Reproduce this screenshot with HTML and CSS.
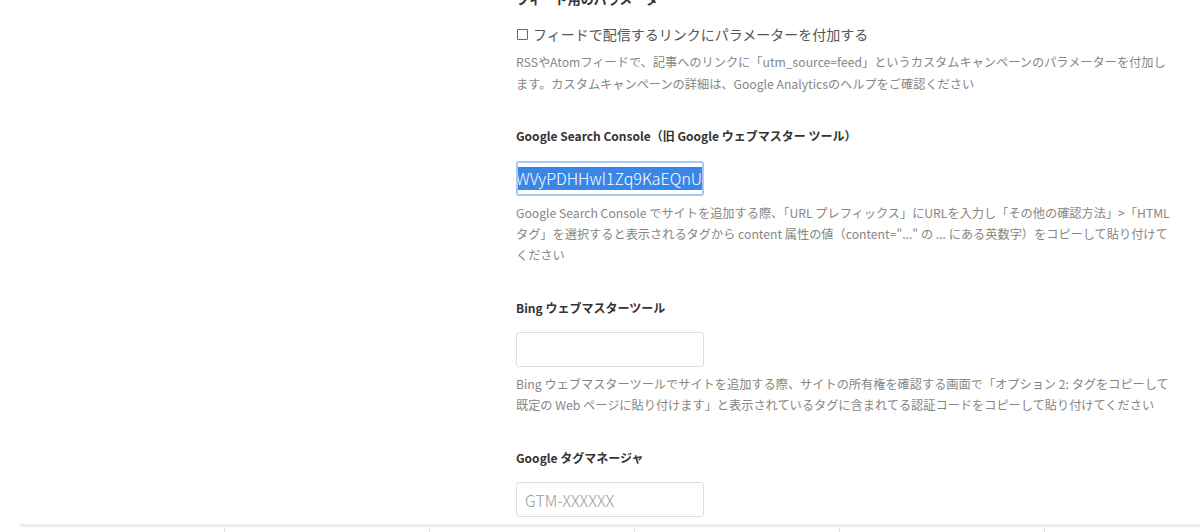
FILE: index.html
```html
<!DOCTYPE html>
<html lang="ja">
<head>
<meta charset="utf-8">
<title>設定</title>
<link rel="stylesheet" href="styles.css">
</head>
<body>
<div class="page">
  <aside class="side"></aside>
  <main class="main">
    <section class="group first">
      <h3 class="label top">フィード用のパラメーター</h3>
      <label class="check"><span class="box"></span>フィードで配信するリンクにパラメーターを付加する</label>
      <p class="help h-first">RSSやAtomフィードで、記事へのリンクに「utm_source=feed」というカスタムキャンペーンのパラメーターを付加し<br>ます。カスタムキャンペーンの詳細は、Google Analyticsのヘルプをご確認ください</p>
    </section>
    <section class="group">
      <h3 class="label wide">Google Search Console（旧 Google ウェブマスター ツール）</h3>
      <div class="field focus"><span class="sel">WVyPDHHwl1Zq9KaEQnU</span></div>
      <p class="help">Google Search Console でサイトを追加する際、「URL プレフィックス」にURLを入力し「その他の確認方法」&gt;「HTML<br>タグ」を選択すると表示されるタグから content 属性の値（content="..." の ... にある英数字）をコピーして貼り付けて<br>ください</p>
    </section>
    <section class="group">
      <h3 class="label">Bing ウェブマスターツール</h3>
      <div class="field"></div>
      <p class="help">Bing ウェブマスターツールでサイトを追加する際、サイトの所有権を確認する画面で「オプション 2: タグをコピーして<br>既定の Web ページに貼り付けます」と表示されているタグに含まれてる認証コードをコピーして貼り付けてください</p>
    </section>
    <section class="group last">
      <h3 class="label">Google タグマネージャ</h3>
      <div class="field"><span class="ph">GTM-XXXXXX</span></div>
    </section>
  </main>
</div>
<footer class="tabs">
  <div class="tab"></div>
  <div class="tab"></div>
  <div class="tab"></div>
  <div class="tab"></div>
  <div class="tab"></div>
  <div class="tab end"></div>
</footer>
</body>
</html>
```

FILE: styles.css
```css
html, body {
  margin: 0;
  padding: 0;
  background: #fff;
  overflow: hidden;
  height: 532px;
}
body {
  font-family: "Noto Sans CJK JP", "Open Sans", sans-serif;
  color: #333;
}
.page {
  display: flex;
  height: 524px;
  overflow: hidden;
}
.side {
  width: 516px;
  flex: none;
}
.main {
  width: 684px;
  flex: none;
}
.group {
  margin-bottom: 32px;
}
.group.first {
  margin-bottom: 31px;
}
.group.last {
  margin-bottom: 0;
}
.label {
  margin: 0 0 14px;
  font-size: 12px;
  line-height: 20px;
  font-weight: 700;
  color: #333;
}
.label.wide {
  margin-bottom: 15px;
}
.label.top {
  margin: -11px 0 0;
  font-size: 13px;
}
.check {
  display: flex;
  align-items: center;
  margin-top: 14px;
  font-size: 14px;
  line-height: 22px;
  color: #555;
}
.box {
  width: 9px;
  height: 9px;
  border: 1px solid #666;
  border-radius: 1px;
  margin: 0 5px 0 1px;
}
.help {
  margin: 7px 0 0;
  font-size: 12.2px;
  line-height: 21px;
  color: #868686;
  white-space: nowrap;
}
.help.h-first {
  margin-top: 6px;
  line-height: 22px;
}
.field {
  box-sizing: border-box;
  width: 188px;
  height: 35px;
  border: 1px solid #dcdfe2;
  border-radius: 3px;
  display: flex;
  align-items: center;
  overflow: hidden;
  white-space: nowrap;
  font-size: 16px;
}
.field.focus {
  border: 2px solid #a3cbf3;
  padding-left: 4px;
}
.sel {
  background: #3a86e6;
  color: #fff;
  margin-left: -6px;
  line-height: 23px;
  font-weight: 300;
  padding: 0 2px 0 0;
}
.ph {
  color: #9a9a9a;
  padding-left: 8px;
  font-weight: 300;
}
.tabs {
  display: flex;
  margin-left: 20px;
  height: 8px;
  border-top: 3px solid #ededed;
  box-sizing: border-box;
}
.tab {
  width: 205px;
  flex: none;
  position: relative;
}
.tab::after {
  content: "";
  position: absolute;
  right: 0;
  top: 1px;
  width: 1px;
  height: 4px;
  background: #e0e0e0;
}
.tab.end {
  flex: 1;
}
.tab.end::after {
  display: none;
}
```
